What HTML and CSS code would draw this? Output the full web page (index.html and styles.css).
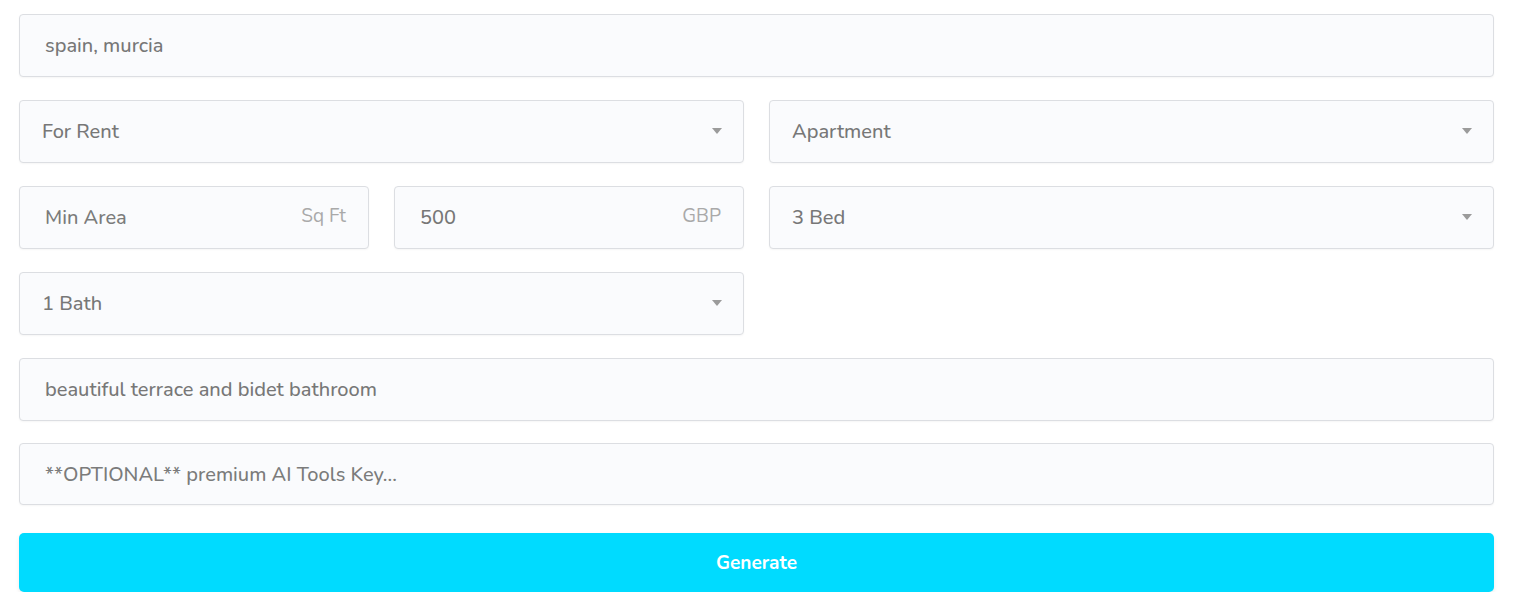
FILE: index.html
```html
<!DOCTYPE html>
<html lang="en">
<head>
<meta charset="utf-8">
<title>Generate</title>
<link rel="stylesheet" href="styles.css">
</head>
<body>
<form class="form">
  <input class="field" type="text" value="spain, murcia">
  <div class="grid">
    <div class="select span2"><select class="field"><option>For Rent</option></select></div>
    <div class="select span2"><select class="field"><option>Apartment</option></select></div>
    <div class="suffixed"><input class="field" type="text" placeholder="Min Area"><span class="suffix">Sq Ft</span></div>
    <div class="suffixed"><input class="field" type="text" value="500"><span class="suffix">GBP</span></div>
    <div class="select span2"><select class="field"><option>3 Bed</option></select></div>
    <div class="select span2"><select class="field"><option>1 Bath</option></select></div>
  </div>
  <input class="field" type="text" value="beautiful terrace and bidet bathroom">
  <input class="field field-short" type="text" placeholder="**OPTIONAL** premium AI Tools Key...">
  <button class="btn" type="button">Generate</button>
</form>
</body>
</html>
```

FILE: styles.css
```css
* { box-sizing: border-box; }
html, body { margin: 0; background: #fff; }
body {
  padding: 14px 20px 0 19px;
  font-family: "Nunito", "Noto Sans", "Open Sans", sans-serif;
}
.form {
  display: flex;
  flex-direction: column;
  gap: 23px;
}
.grid {
  display: grid;
  grid-template-columns: repeat(4, 1fr);
  gap: 23px 25px;
}
.span2 { grid-column: span 2; }
.field {
  display: block;
  width: 100%;
  height: 63px;
  margin: 0;
  padding: 0 24px 0 25px;
  background: #fafbfd;
  border: 1px solid #dcdee2;
  border-radius: 4px;
  box-shadow: 0 1px 2px rgba(0,0,0,0.04);
  font-family: inherit;
  font-size: 20px;
  font-weight: 500;
  color: #777777;
  outline: none;
}
.field-short { height: 62px; margin-top: -1px; }
.field::placeholder { color: #7b7b7b; opacity: 1; }
select.field {
  appearance: none;
  -webkit-appearance: none;
  padding-left: 22px;
}
.select { position: relative; }
.select::after {
  content: "";
  position: absolute;
  right: 22px;
  top: 28px;
  border-left: 5.5px solid transparent;
  border-right: 5.5px solid transparent;
  border-top: 6px solid #9b9b9b;
  pointer-events: none;
}
.suffixed { position: relative; }
.suffix {
  position: absolute;
  right: 23px;
  top: 17px;
  font-size: 19px;
  color: #a9a9a9;
  pointer-events: none;
}
.btn {
  margin-top: 5px;
  height: 59px;
  width: 100%;
  border: 0;
  border-radius: 5px;
  background: #00dbff;
  color: #fff;
  font-family: inherit;
  font-size: 19px;
  font-weight: 700;
  box-shadow: 0 2px 4px rgba(0,0,0,0.08);
}
```
